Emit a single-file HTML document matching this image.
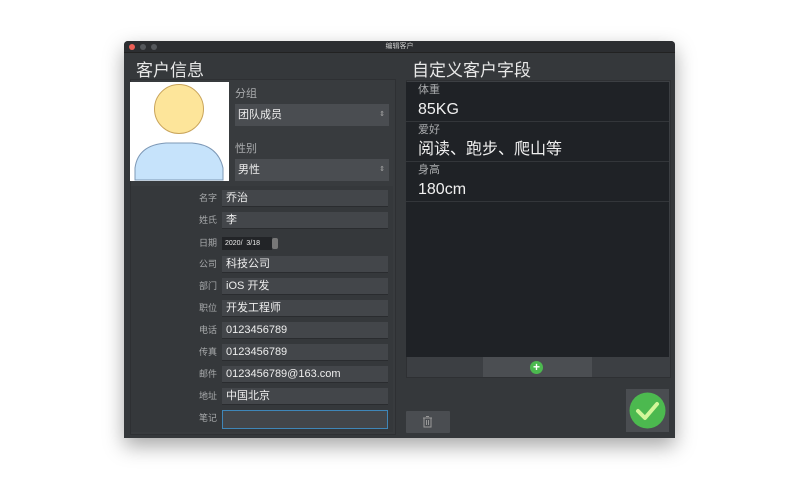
<!DOCTYPE html>
<html><head><meta charset="utf-8"><style>
body{margin:0;width:800px;height:500px;background:#fff;position:relative;overflow:hidden;font-family:"Liberation Sans","Noto Sans CJK SC",sans-serif;}
.a{position:absolute}
.win{left:124px;top:41px;width:551px;height:397px;background:#35383b;box-shadow:0 8px 20px rgba(0,0,0,.35);border-radius:4px 4px 0 0}
.tb{left:0;top:0;width:551px;height:11px;background:#2c2e31;border-bottom:1px solid #222;border-radius:4px 4px 0 0;color:#ccc;font-size:7px;text-align:center;line-height:11px}
.dot{top:3px;width:6px;height:6px;border-radius:50%;background:#55585c}
.lab{color:#a9abad;font-size:9px;text-align:right;width:30px}
.f{left:98px;width:166px;height:17px;background:#43464a;border-bottom:1px solid #2a2c2f;color:#eee;font-size:11px;line-height:17px;padding-left:4px;box-sizing:border-box}
.t{color:#e8e8e8;line-height:20px}
.rl{color:#a9abad;font-size:11px;left:12px;line-height:14px}
.rv{color:#f0f0f0;font-size:16px;left:12px;line-height:20px}
.sep{left:0;width:263px;height:1px;background:#33363a}
</style></head><body>
<div class="a win">
 <div class="a tb">编辑客户</div>
 <div class="a dot" style="left:5px;background:#ec5f56"></div>
 <div class="a dot" style="left:16px"></div>
 <div class="a dot" style="left:27px"></div>
 <div class="a t" style="left:12px;top:20px;font-size:17px">客户信息</div>
 <div class="a" style="left:6px;top:38px;width:264px;height:354px;background:#383b3e;border:1px solid #2e3033"></div>
 <div class="a" style="left:6px;top:41px;width:99px;height:99px;background:#fff">
  <svg width="99" height="99"><circle cx="49" cy="27" r="24.5" fill="#fde59a" stroke="#c9a45a" stroke-width="1"/><path d="M5 98 V86 Q8 63 36 61 H62 Q88 63 93 86 V98 Z" fill="#c6e3fb" stroke="#7d98b6" stroke-width="1"/></svg>
 </div>
 <div class="a" style="left:111px;top:44px;color:#a9abad;font-size:11px">分组</div>
 <div class="a" style="left:111px;top:63px;width:154px;height:22px;background:#4a4d51;color:#eee;font-size:11px;line-height:22px;padding-left:3px;box-sizing:border-box">团队成员<span style="position:absolute;right:4px;font-size:7px;color:#aaa">⇕</span></div>
 <div class="a" style="left:111px;top:99px;color:#a9abad;font-size:11px">性别</div>
 <div class="a" style="left:111px;top:118px;width:154px;height:22px;background:#4a4d51;color:#eee;font-size:11px;line-height:22px;padding-left:3px;box-sizing:border-box">男性<span style="position:absolute;right:4px;font-size:7px;color:#aaa">⇕</span></div>
 <div class="a" style="left:7px;top:145px;width:262px;height:246px;background:#35383b"></div>
 <div class="a lab" style="left:63px;top:150px">名字</div><div class="a f" style="top:149px">乔治</div>
 <div class="a lab" style="left:63px;top:172px">姓氏</div><div class="a f" style="top:171px">李</div>
 <div class="a lab" style="left:63px;top:195px">日期</div><div class="a" style="left:98px;top:196px;width:47px;height:13px;background:#222427;color:#eee;font-size:7px;line-height:13px;padding-left:3px">2020/&nbsp; 3/18</div><div class="a" style="left:148px;top:197px;width:6px;height:11px;background:#777;border-radius:2px"></div>
 <div class="a lab" style="left:63px;top:216px">公司</div><div class="a f" style="top:215px">科技公司</div>
 <div class="a lab" style="left:63px;top:238px">部门</div><div class="a f" style="top:237px">iOS 开发</div>
 <div class="a lab" style="left:63px;top:260px">职位</div><div class="a f" style="top:259px">开发工程师</div>
 <div class="a lab" style="left:63px;top:282px">电话</div><div class="a f" style="top:281px">0123456789</div>
 <div class="a lab" style="left:63px;top:304px">传真</div><div class="a f" style="top:303px">0123456789</div>
 <div class="a lab" style="left:63px;top:326px">邮件</div><div class="a f" style="top:325px">0123456789@163.com</div>
 <div class="a lab" style="left:63px;top:348px">地址</div><div class="a f" style="top:347px">中国北京</div>
 <div class="a lab" style="left:63px;top:370px">笔记</div><div class="a f" style="top:369px;border:1.5px solid #3f86b8;height:19px"></div>
 <div class="a t" style="left:288px;top:20px;font-size:17px">自定义客户字段</div>
 <div class="a" style="left:282px;top:39px;width:263px;height:296px;background:#3c3f43;border:1px solid #2e3033"></div>
 <div class="a" style="left:282px;top:41px;width:263px;height:275px;background:#1f2226">
  <div class="a rl" style="top:1px">体重</div><div class="a rv" style="top:18px">85KG</div><div class="a sep" style="top:39px"></div>
  <div class="a rl" style="top:41px">爱好</div><div class="a rv" style="top:58px">阅读、跑步、爬山等</div><div class="a sep" style="top:79px"></div>
  <div class="a rl" style="top:81px">身高</div><div class="a rv" style="top:98px">180cm</div><div class="a sep" style="top:119px"></div>
 </div>
 <div class="a" style="left:359px;top:316px;width:109px;height:20px;background:#4b4e52"></div>
 <div class="a" style="left:406px;top:320px;width:13px;height:13px;border-radius:50%;background:#4cb94f;color:#fff;font-size:12px;font-weight:bold;line-height:13px;text-align:center">+</div>
 <div class="a" style="left:282px;top:370px;width:44px;height:22px;background:#4a4d51;border-radius:1px"><svg width="44" height="22"><rect x="18" y="7" width="7" height="9" fill="none" stroke="#999" stroke-width="1"/><path d="M17 7h9M20 5.5h3M20.5 9v5M22.5 9v5" stroke="#999" stroke-width="1"/></svg></div>
 <div class="a" style="left:502px;top:348px;width:43px;height:43px;background:#4a4d51"><svg width="43" height="43"><circle cx="21.5" cy="21.5" r="18" fill="#4cb94f"/><path d="M12 22 L19 29 L31 15" fill="none" stroke="#d3f79a" stroke-width="4" stroke-linecap="round" stroke-linejoin="round"/></svg></div>
</div>
</body></html>
